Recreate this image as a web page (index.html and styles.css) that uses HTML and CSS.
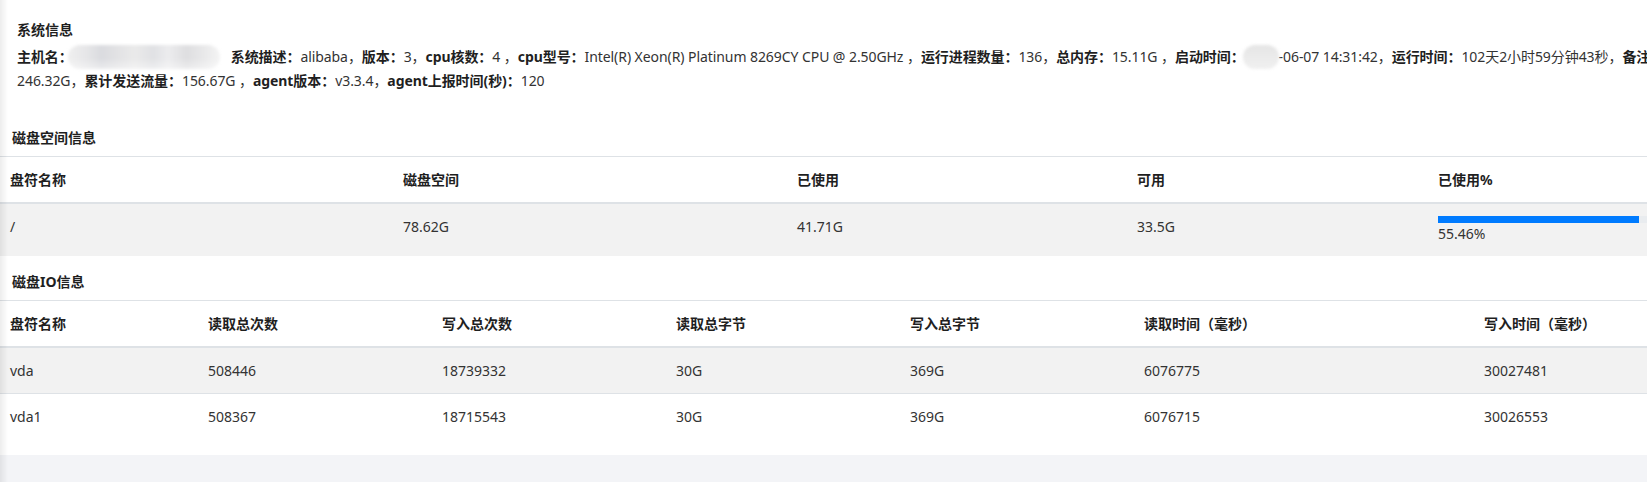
FILE: index.html
```html
<!DOCTYPE html>
<html lang="zh-CN">
<head>
<meta charset="utf-8">
<title>系统信息</title>
<link rel="stylesheet" href="styles.css">
</head>
<body>
<div class="edge-shade"></div>
<main class="card">
  <section class="sys">
    <h5 class="sys-title">系统信息</h5>
    <p class="sys-info"><b>主机名：</b><span class="blur blur-host"></span><b>系统描述：</b>alibaba，<b>版本：</b>3，<b>cpu核数：</b>4 ，<b>cpu型号：</b>Intel(R) Xeon(R) Platinum 8269CY CPU @ 2.50GHz ，<b>运行进程数量：</b>136，<b>总内存：</b>15.11G ，<b>启动时间：</b><span class="blur blur-date"></span>-06-07 14:31:42，<b>运行时间：</b>102天2小时59分钟43秒，<b>备注：</b>无，<b>累计接收流量：</b><br>246.32G，<b>累计发送流量：</b>156.67G ，<b>agent版本：</b>v3.3.4，<b>agent上报时间(秒)：</b>120</p>
  </section>

  <section class="block block-disk">
    <h5 class="block-title">磁盘空间信息</h5>
    <table class="tbl">
      <colgroup>
        <col class="d1"><col class="d2"><col class="d3"><col class="d4"><col class="d5">
      </colgroup>
      <thead>
        <tr><th>盘符名称</th><th>磁盘空间</th><th>已使用</th><th>可用</th><th>已使用%</th></tr>
      </thead>
      <tbody>
        <tr class="odd">
          <td>/</td><td>78.62G</td><td>41.71G</td><td>33.5G</td>
          <td><div class="progress"><div class="progress-bar" style="width:55.46%"></div></div>55.46%</td>
        </tr>
      </tbody>
    </table>
  </section>

  <section class="block block-io">
    <h5 class="block-title">磁盘IO信息</h5>
    <table class="tbl">
      <colgroup>
        <col class="i1"><col class="i2"><col class="i3"><col class="i4"><col class="i5"><col class="i6"><col class="i7">
      </colgroup>
      <thead>
        <tr><th>盘符名称</th><th>读取总次数</th><th>写入总次数</th><th>读取总字节</th><th>写入总字节</th><th>读取时间（毫秒）</th><th>写入时间（毫秒）</th></tr>
      </thead>
      <tbody>
        <tr class="odd"><td>vda</td><td>508446</td><td>18739332</td><td>30G</td><td>369G</td><td>6076775</td><td>30027481</td></tr>
        <tr><td>vda1</td><td>508367</td><td>18715543</td><td>30G</td><td>369G</td><td>6076715</td><td>30026553</td></tr>
      </tbody>
    </table>
  </section>
</main>
</body>
</html>
```

FILE: styles.css
```css
html, body {
  margin: 0;
  padding: 0;
  overflow: hidden;
}

body {
  background: #f3f4f7;
  font-family: "Segoe UI", "Noto Sans", "Noto Sans CJK SC", sans-serif;
  font-size: 14px;
  line-height: 21px;
  color: #333;
}

.edge-shade {
  position: fixed;
  left: 0;
  top: 0;
  bottom: 0;
  width: 8px;
  background: linear-gradient(to right, rgba(0, 0, 0, 0.07), rgba(0, 0, 0, 0));
  z-index: 5;
  pointer-events: none;
}

.card {
  display: block;
  width: 1850px;
  background: #fff;
  padding-bottom: 16px;
  box-shadow: 0 1px 2px rgba(0, 0, 0, 0.16);
}

.sys {
  padding: 19px 17px 0 17px;
}

.sys-title,
.block-title {
  margin: 0;
  font-size: 14px;
  font-weight: bold;
  line-height: 21px;
  color: #1f1f1f;
}

.sys-title {
  margin-bottom: 6px;
}

.sys-info {
  margin: 0;
  line-height: 22px;
  color: #333;
  letter-spacing: -0.07px;
}

.sys-info b {
  color: #1f1f1f;
}

.blur {
  display: inline-block;
  vertical-align: middle;
  height: 24px;
  border-radius: 12px;
  filter: blur(1.5px);
  position: relative;
  top: -1px;
}

.blur-host {
  width: 152px;
  margin-left: -5px;
  margin-right: 11px;
  background:
    linear-gradient(to bottom, rgba(255, 255, 255, 0) 55%, rgba(255, 255, 255, 0.45) 100%),
    linear-gradient(to right, #efefef 0%, #e6e6e8 12%, #dadbdf 22%, #e3e3e5 34%, #eaeaea 44%, #e0e1e4 56%, #ececee 66%, #dedee0 78%, #e9e9ea 90%, #f4f4f4 100%);
}

.blur-date {
  width: 36px;
  margin-left: -2px;
  background: linear-gradient(to bottom, #e5e5e5, #f0f0f0);
}

.block-disk {
  margin-top: 35px;
}

.block-io {
  margin-top: 15px;
}

.block-title {
  padding-left: 12px;
  margin-bottom: 8px;
}

.tbl {
  width: 1810px;
  table-layout: fixed;
  border-collapse: collapse;
  color: #333;
}

.tbl th,
.tbl td {
  padding: 12px 10px;
  text-align: left;
  vertical-align: top;
  border-top: 1px solid #dee2e6;
  white-space: nowrap;
}

.tbl th {
  font-weight: bold;
  color: #1f1f1f;
  border-bottom: 2px solid #dee2e6;
}

.tbl tbody tr:first-child td {
  border-top: none;
}

.tbl tr.odd td {
  background: #f2f2f2;
}

.d1 { width: 393px; }
.d2 { width: 394px; }
.d3 { width: 340px; }
.d4 { width: 301px; }
.d5 { width: 382px; }

.i1 { width: 198px; }
.i2 { width: 234px; }
.i3 { width: 234px; }
.i4 { width: 234px; }
.i5 { width: 234px; }
.i6 { width: 340px; }
.i7 { width: 336px; }

.progress {
  height: 7px;
  background: #e9ecef;
  overflow: hidden;
}

.progress-bar {
  height: 100%;
  background: #007bff;
}
```
